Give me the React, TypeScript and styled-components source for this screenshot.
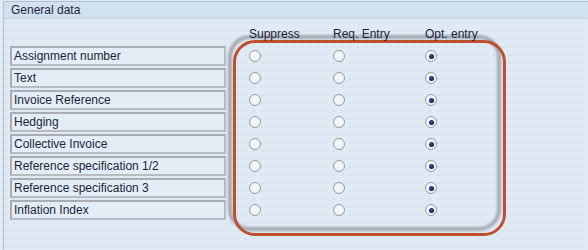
import React from "react";
import styled, { createGlobalStyle } from "styled-components";

const Global = createGlobalStyle`
  html, body { margin: 0; padding: 0; }
  body {
    width: 588px;
    height: 250px;
    overflow: hidden;
    background: #dfeaf4;
    font-family: "Liberation Sans", Arial, sans-serif;
  }
`;

const Page = styled.div`
  position: relative;
  width: 588px;
  height: 250px;
  padding: 1px 0 0 3px;
  box-sizing: border-box;
  background-color: #dfeaf4;
  background-image: radial-gradient(circle, #d2deea 0.7px, transparent 1px);
  background-size: 8px 8px;
  background-position: 2px 3px;
`;

const Panel = styled.section`
  height: 100%;
  border-left: 1px solid #b3c0cc;
  border-top: 1px solid #b3c0cc;
  box-sizing: border-box;
`;

const Header = styled.div`
  height: 16px;
  padding-left: 7px;
  display: flex;
  align-items: center;
  background: #d2e1ee;
  border-bottom: 1px solid #c5d4e1;
  font-size: 12px;
  color: #1e1e3c;
`;

const Content = styled.div`
  padding: 8px 0 0 6px;
`;

const Grid = styled.div`
  display: grid;
  grid-template-columns: 239px 84px 92px 90px;
  grid-template-rows: 19px;
  grid-auto-rows: 22px;
  align-items: center;
`;

const HeadRow = styled.div`
  display: contents;
`;

const ColHead = styled.div`
  position: relative;
  z-index: 2;
  font-size: 12px;
  line-height: 14px;
  color: #1e1e3c;
  align-self: start;
  white-space: nowrap;
`;

const LabelBox = styled.div`
  width: 216px;
  height: 20px;
  box-sizing: border-box;
  border: 2px solid #a9adb2;
  border-right-color: #b8bcc1;
  border-bottom-color: #b8bcc1;
  background: #e3edf6;
  padding-left: 2px;
  display: flex;
  align-items: center;
  font-size: 12px;
  color: #221f3a;
  white-space: nowrap;
  align-self: start;
`;

const Radio = styled.span<{ $on?: boolean }>`
  width: 12px;
  height: 12px;
  margin-top: -2px;
  box-sizing: border-box;
  border: 1px solid #9c9c9c;
  border-radius: 50%;
  background: radial-gradient(circle at 45% 40%, #f6f9fc 0%, #e6eef6 100%);
  display: flex;
  align-items: center;
  justify-content: center;
  &::after {
    content: "";
    display: ${(p) => (p.$on ? "block" : "none")};
    width: 5px;
    height: 5px;
    border-radius: 50%;
    background: radial-gradient(circle at 40% 35%, #3a4aa0 0%, #0d1440 80%);
  }
`;

const Shadow = styled.div`
  position: absolute;
  z-index: 1;
  left: 228px;
  top: 35px;
  width: 273px;
  height: 196px;
  box-sizing: border-box;
  border: 4px solid #a3abb4;
  border-radius: 22px;
  filter: blur(0.8px);
  pointer-events: none;
`;

const Highlight = styled.div`
  position: absolute;
  z-index: 1;
  left: 233px;
  top: 40px;
  width: 273px;
  height: 196px;
  box-sizing: border-box;
  border: 3px solid #c0502d;
  border-radius: 22px;
  pointer-events: none;
`;

const rows = [
  "Assignment number",
  "Text",
  "Invoice Reference",
  "Hedging",
  "Collective Invoice",
  "Reference specification 1/2",
  "Reference specification 3",
  "Inflation Index",
];

export default function App() {
  return (
    <>
      <Global />
      <Page>
        <Panel>
          <Header>General data</Header>
          <Content>
            <Grid>
              <HeadRow>
                <div />
                <ColHead>Suppress</ColHead>
                <ColHead>Req. Entry</ColHead>
                <ColHead>Opt. entry</ColHead>
              </HeadRow>
              {rows.map((r) => (
                <React.Fragment key={r}>
                  <LabelBox>{r}</LabelBox>
                  <Radio />
                  <Radio />
                  <Radio $on />
                </React.Fragment>
              ))}
            </Grid>
          </Content>
        </Panel>
        <Shadow />
        <Highlight />
      </Page>
    </>
  );
}
